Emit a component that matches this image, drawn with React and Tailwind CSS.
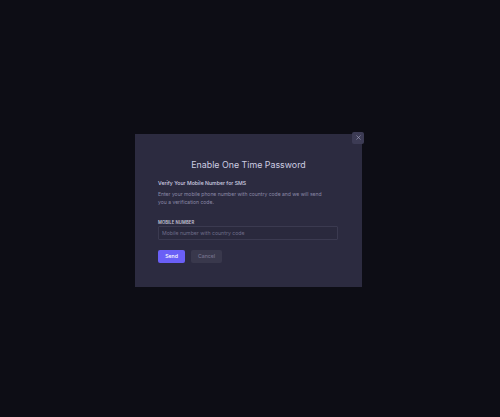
import { X } from 'lucide-react';

export default function App() {
  return (
    <div className="w-[500px] h-[417px] bg-[#0d0d15] flex items-center justify-center pr-[3px] pt-[3px] font-['Inter',sans-serif]">
      <div className="relative w-[227px] bg-[#2c2b40] px-[23px] pt-[24px] pb-[24px]">
        {/* close */}
        <button className="absolute -top-[2px] -right-[2px] w-[12px] h-[12px] rounded-[2px] bg-[#3c3b54] flex items-center justify-center text-[#a9a8c4]">
          <X size={7} strokeWidth={2} />
        </button>

        <h2 className="text-center text-[8.85px] text-[#cdcce1] leading-[14px]">Enable One Time Password</h2>

        <div className="mt-[7px]">
          <h3 className="text-[5.2px] font-medium text-[#d0cfe3] leading-[8px]">Verify Your Mobile Number for SMS</h3>
          <p className="mt-[3px] text-[5.05px] text-[#8a88a6] leading-[8px] w-[170px]">
            Enter your mobile phone number with country code and we will send you a verification code.
          </p>
        </div>

        <div className="mt-[14px]">
          <label className="block text-[4.2px] font-semibold uppercase tracking-[0.02em] text-[#c3c2d6] leading-[6px]">Mobile Number</label>
          <input
            type="text"
            placeholder="Mobile number with country code"
            className="block w-[180px] h-[14px] bg-[#2a293d] border border-[#3b3a50] rounded-[1px] px-[3px] text-[5.2px] leading-[12px] text-[#c9c8dc] placeholder:text-[#6f6d8a] outline-none"
          />
        </div>

        <div className="mt-[10px] flex gap-[6px]">
          <button className="w-[27px] h-[13px] rounded-[2px] bg-[#6a5ff6] text-white text-[5.2px] font-medium leading-[13px]">Send</button>
          <button className="w-[31px] h-[13px] rounded-[2px] bg-[#39384c] text-[#76748e] text-[5.2px] font-medium leading-[13px]">Cancel</button>
        </div>
      </div>
    </div>
  );
}
